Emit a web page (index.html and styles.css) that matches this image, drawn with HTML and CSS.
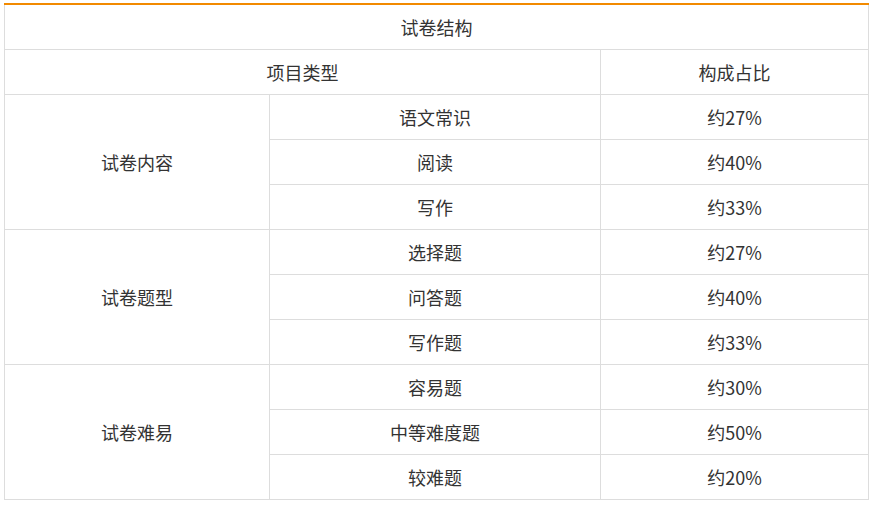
FILE: index.html
```html
<!DOCTYPE html>
<html lang="zh">
<head>
<meta charset="utf-8">
<link rel="stylesheet" href="styles.css">
</head>
<body>
<div class="wrap">
<table class="exam">
<colgroup><col class="c1"><col class="c2"><col class="c3"></colgroup>
<tr><td colspan="3" class="title">试卷结构</td></tr>
<tr><td colspan="2">项目类型</td><td>构成占比</td></tr>
<tr><td rowspan="3">试卷内容</td><td>语文常识</td><td>约27%</td></tr>
<tr><td>阅读</td><td>约40%</td></tr>
<tr><td>写作</td><td>约33%</td></tr>
<tr><td rowspan="3">试卷题型</td><td>选择题</td><td>约27%</td></tr>
<tr><td>问答题</td><td>约40%</td></tr>
<tr><td>写作题</td><td>约33%</td></tr>
<tr><td rowspan="3">试卷难易</td><td>容易题</td><td>约30%</td></tr>
<tr><td>中等难度题</td><td>约50%</td></tr>
<tr><td>较难题</td><td>约20%</td></tr>
</table>
</div>
</body>
</html>
```
FILE: styles.css
```css
html, body { margin: 0; padding: 0; background: #fff; }
.wrap { padding: 3px 0 0 4px; }
.exam {
  border-collapse: collapse;
  table-layout: fixed;
  width: 864px;
  border-top: 2px solid #f28a00;
  font-family: "Noto Sans CJK SC", "Microsoft YaHei", sans-serif;
  font-size: 18px;
  color: #333;
}
.c1 { width: 265px; }
.c2 { width: 331px; }
.c3 { width: 268px; }
.exam td {
  border: 1px solid #dddddd;
  height: 44px;
  padding: 0;
  text-align: center;
  vertical-align: middle;
  line-height: 22px;
}
.exam .title { border-top: 2px solid #f28a00; }
```
